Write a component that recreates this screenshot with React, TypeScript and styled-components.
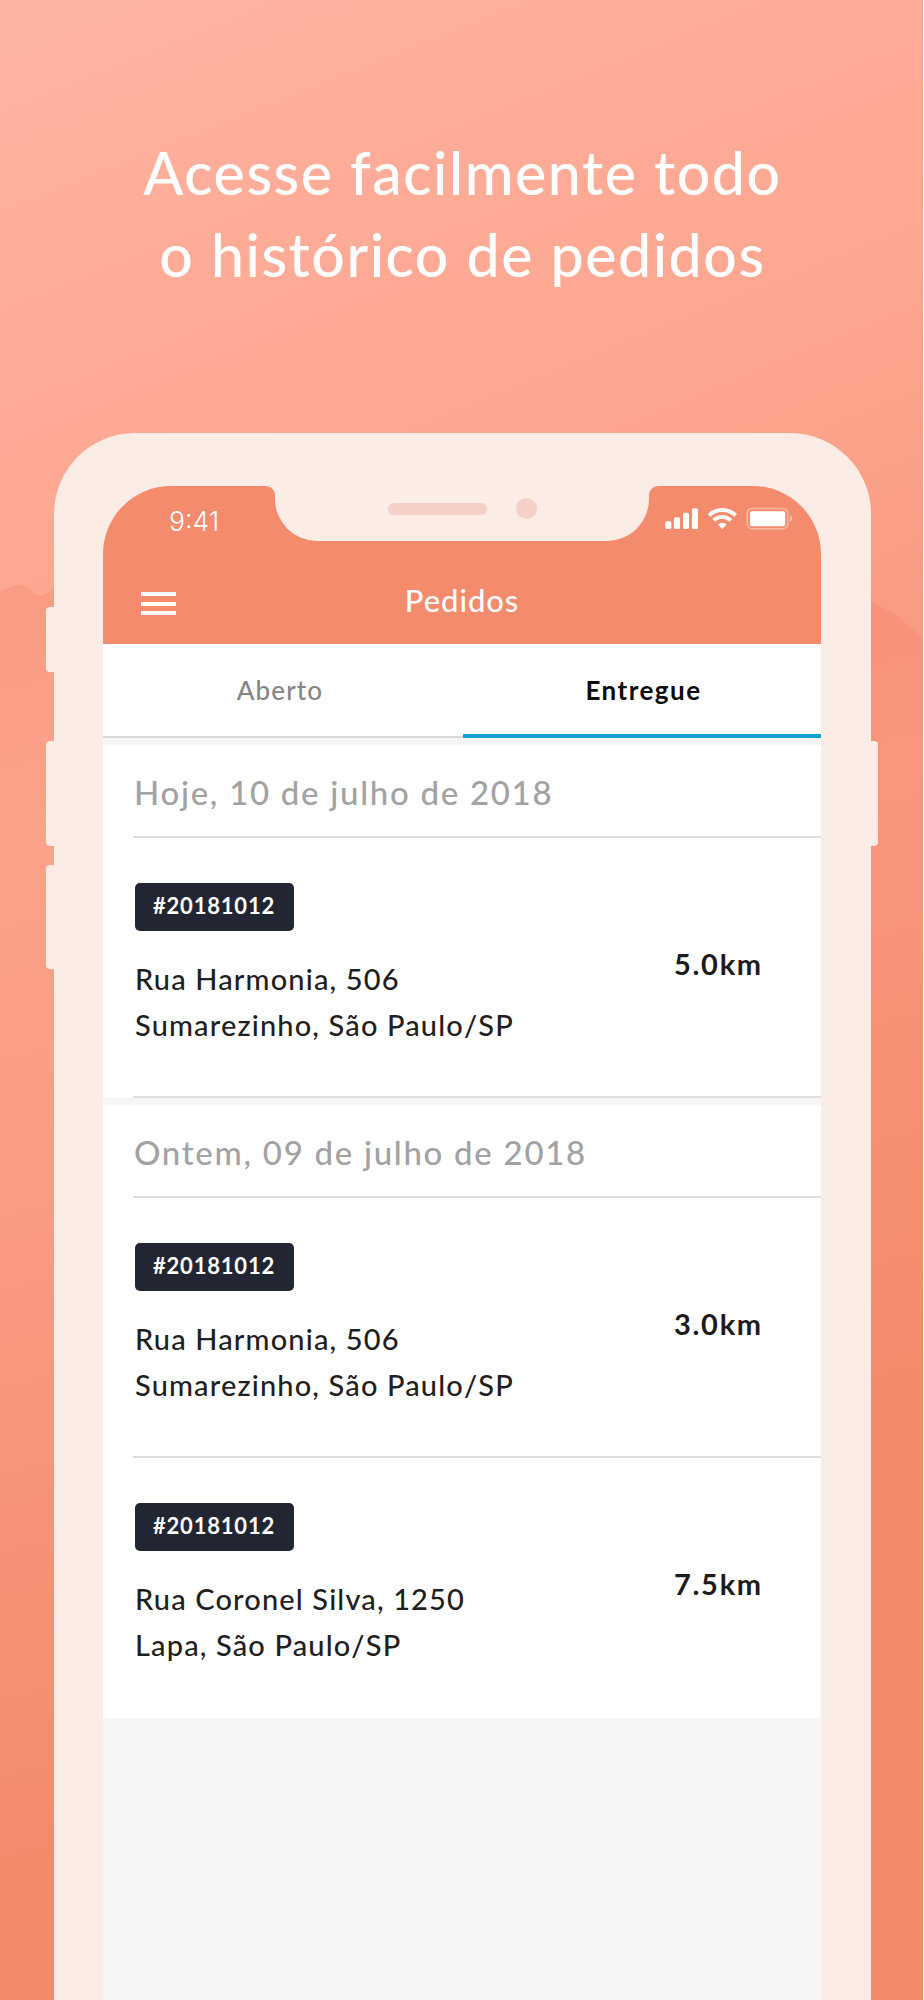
import React from "react";
import styled, { createGlobalStyle, css } from "styled-components";

const coral = "#f48b6d";
const shell = "#fbece5";

const GlobalStyle = createGlobalStyle`
  *, *::before, *::after { box-sizing: border-box; }
  html, body { margin: 0; padding: 0; background: #fff; }
  body { font-family: Lato, "Liberation Sans", sans-serif; font-weight: 500; }
`;

const Page = styled.main`
  position: relative;
  width: 923px;
  height: 2000px;
  overflow: hidden;
  display: flex;
  flex-direction: column;
  background: linear-gradient(158deg, #ffb4a2 0, #feab97 350px, #fda791 560px, #fba189 750px, #fa9b84 920px);
`;

const Landscape = styled.svg`
  position: absolute;
  inset: 0;
`;

const Headline = styled.h1`
  position: relative;
  margin: 0;
  padding: 132px 0 0 2px;
  height: 433px;
  text-align: center;
  font-size: 59px;
  line-height: 82px;
  font-weight: 500;
  letter-spacing: 1.56px;
  color: #fff;
`;

const Phone = styled.section`
  position: relative;
  flex: 1;
  display: flex;
  width: 817px;
  margin-left: 54px;
  padding: 53px 50px 0 49px;
  border-radius: 81px 81px 0 0;
  background: ${shell};
`;

const SideButton = styled.span<{ $side: "left" | "right"; $top: number; $height: number }>`
  position: absolute;
  top: ${(p) => p.$top}px;
  height: ${(p) => p.$height}px;
  background: ${shell};
  ${(p) =>
    p.$side === "left"
      ? css`
          left: -8px;
          width: 9px;
          border-radius: 4px 0 0 4px;
        `
      : css`
          right: -7px;
          width: 8px;
          border-radius: 0 4px 4px 0;
        `}
`;

const Screen = styled.div`
  flex: 1;
  display: flex;
  flex-direction: column;
  overflow: hidden;
  border-radius: 68px 68px 0 0;
  background: #f5f5f5;
`;

const StatusBar = styled.div`
  display: flex;
  height: 55px;
  background: ${shell};
`;

const StatusSide = styled.div<{ $align: "left" | "right" }>`
  display: flex;
  width: 172px;
  background: ${coral};
  ${(p) =>
    p.$align === "left"
      ? css`
          padding: 19px 0 0 66px;
          border-top-right-radius: 9px;
        `
      : css`
          padding: 21px 0 0 16px;
          border-top-left-radius: 9px;
        `}
`;

const Clock = styled.time`
  font-family: Inter, sans-serif;
  font-size: 26.5px;
  line-height: 32px;
  font-weight: 350;
  letter-spacing: 0;
  color: #fff;
`;

const NotchWell = styled.div`
  flex: 1;
  background: ${coral};
`;

const Notch = styled.div`
  display: flex;
  height: 100%;
  padding: 12px 0 0 113px;
  gap: 29px;
  border-radius: 0 0 42px 42px;
  background: ${shell};
`;

const Speaker = styled.span`
  width: 99px;
  height: 12px;
  margin-top: 5px;
  border-radius: 6px;
  background: #f5d0c8;
`;

const Camera = styled.span`
  width: 21px;
  height: 21px;
  border-radius: 50%;
  background: #f5d0c8;
`;

const NavBar = styled.header`
  display: grid;
  grid-template-columns: 1fr auto 1fr;
  align-items: start;
  height: 103px;
  padding: 38px 38px 0;
  background: ${coral};
`;

const MenuButton = styled.button`
  display: flex;
  flex-direction: column;
  gap: 5.5px;
  width: 35px;
  margin: 13px 0 0;
  padding: 0;
  border: 0;
  background: none;
`;

const MenuBar = styled.span`
  height: 4px;
  background: #fff;
`;

const NavTitle = styled.h2`
  margin: 0;
  font-size: 31px;
  line-height: 42px;
  font-weight: 500;
  letter-spacing: 0.95px;
  color: #fff;
`;

const Tabs = styled.nav`
  display: flex;
  height: 94px;
  background: #fff;
`;

const Tab = styled.button<{ $active?: boolean }>`
  flex: ${(p) => (p.$active ? "0 0 358px" : "1")};
  display: block;
  margin: 0;
  padding: ${(p) => (p.$active ? "29px 0 27px 3px" : "29px 6px 30px 0")};
  border: 0;
  border-bottom: ${(p) => (p.$active ? "4px solid #12a2d6" : "2px solid #d9d9d9")};
  background: none;
  font: inherit;
  font-size: 26px;
  line-height: 32px;
  font-weight: ${(p) => (p.$active ? 700 : 500)};
  letter-spacing: ${(p) => (p.$active ? 1.47 : 1.15)}px;
  color: ${(p) => (p.$active ? "#0b0b0b" : "#858585")};
`;

const Day = styled.section`
  margin-top: 7px;
  background: #fff;
`;

const DayTitle = styled.h3`
  margin: 0 0 0 30px;
  padding: 27px 0 24px 1px;
  border-bottom: 2px solid #dfdfe1;
  font-size: 33px;
  line-height: 40px;
  font-weight: 500;
  letter-spacing: 1.7px;
  color: #a2a2a4;
`;

const Order = styled.article<{ $last?: boolean }>`
  display: flex;
  align-items: center;
  justify-content: space-between;
  height: 260px;
  margin-left: 30px;
  border-bottom: 2px solid ${(p) => (p.$last ? "transparent" : "#dfdfe1")};
`;

const OrderInfo = styled.div`
  padding: 0 0 3px 2px;
`;

const OrderCode = styled.span`
  display: block;
  width: 159px;
  height: 48px;
  padding-left: 18px;
  border-radius: 5px;
  background: #222632;
  font-size: 22px;
  line-height: 45px;
  font-weight: 700;
  letter-spacing: 0.8px;
  color: #fff;
`;

const Address = styled.address`
  margin-top: 25px;
  font-size: 29px;
  line-height: 46px;
  font-style: normal;
  letter-spacing: 1.14px;
  white-space: pre-line;
  color: #1f1f1f;
`;

const Distance = styled.strong`
  width: 147px;
  margin-bottom: 6px;
  font-size: 29px;
  line-height: 46px;
  font-weight: 700;
  letter-spacing: 1.7px;
  color: #1c1c1c;
`;

const StatusIcons = () => (
  <svg width="130" height="24" viewBox="0 0 130 24" fill="#fff">
    <rect x="0.3" y="14.2" width="6" height="7.8" rx="1.6" />
    <rect x="9" y="10.2" width="6" height="11.8" rx="1.6" />
    <rect x="18" y="5.7" width="6" height="16.3" rx="1.6" />
    <rect x="27" y="1.2" width="6" height="20.8" rx="1.6" />
    <g fill="none" stroke="#fff" strokeWidth="3.9">
      <path d="M44 8.3 A19.3 19.3 0 0 1 70.6 8.3" />
      <path d="M48.8 13.3 A12.2 12.2 0 0 1 65.8 13.3" />
    </g>
    <path d="M57.3 22 L52.9 17.6 A6.3 6.3 0 0 1 61.7 17.6 Z" />
    <rect x="82.2" y="1.5" width="40.6" height="20.4" rx="5" fill="none" stroke="#fff" strokeOpacity="0.36" strokeWidth="1.7" />
    <rect x="85" y="4.3" width="35.2" height="14.9" rx="2" />
    <path d="M125.4 8.6 a4.6 4.6 0 0 1 0 6.2 z" fillOpacity="0.42" stroke="#fff" strokeOpacity="0.3" strokeWidth="0.8" />
  </svg>
);

const Hills = () => (
  <Landscape width="923" height="2000" viewBox="0 0 923 2000">
    <defs>
      <linearGradient id="hillWest" gradientUnits="userSpaceOnUse" x1="0" y1="600" x2="306" y2="1823">
        <stop offset="0" stopColor="#fa9b85" />
        <stop offset="0.185" stopColor="#fba28a" />
        <stop offset="0.42" stopColor="#fa9c85" />
        <stop offset="0.69" stopColor="#f7937a" />
        <stop offset="0.98" stopColor="#f48a6c" />
      </linearGradient>
      <linearGradient id="hillEast" gradientUnits="userSpaceOnUse" x1="880" y1="600" x2="1068" y2="1353">
        <stop offset="0" stopColor="#f8917a" />
        <stop offset="0.2" stopColor="#f9967e" />
        <stop offset="0.4" stopColor="#f8947b" />
        <stop offset="0.7" stopColor="#f68e71" />
        <stop offset="1" stopColor="#f48a6c" />
      </linearGradient>
    </defs>
    <path
      fill="url(#hillWest)"
      d="M0 591 C8 589 13 585 20 585 C29 585 34 596 41 596 C47 596 50 588 58 585 L460 600 V2000 H0 Z"
    />
    <path fill="url(#hillEast)" d="M460 600 H866 C880 605 892 612 902 620 C909 625 916 632 923 638 V2000 H460 Z" />
  </Landscape>
);

const days = [
  {
    title: "Hoje, 10 de julho de 2018",
    orders: [{ code: "#20181012", address: "Rua Harmonia, 506\nSumarezinho, São Paulo/SP", distance: "5.0km" }],
  },
  {
    title: "Ontem, 09 de julho de 2018",
    orders: [
      { code: "#20181012", address: "Rua Harmonia, 506\nSumarezinho, São Paulo/SP", distance: "3.0km" },
      { code: "#20181012", address: "Rua Coronel Silva, 1250\nLapa, São Paulo/SP", distance: "7.5km" },
    ],
  },
];

export default function App() {
  return (
    <>
      <GlobalStyle />
      <Page>
        <Hills />
        <Headline>
          Acesse facilmente todo
          <br />o histórico de pedidos
        </Headline>
        <Phone>
          <SideButton $side="left" $top={174} $height={65} />
          <SideButton $side="left" $top={308} $height={105} />
          <SideButton $side="left" $top={432} $height={104} />
          <SideButton $side="right" $top={308} $height={105} />
          <Screen>
            <StatusBar>
              <StatusSide $align="left">
                <Clock>9:41</Clock>
              </StatusSide>
              <NotchWell>
                <Notch>
                  <Speaker />
                  <Camera />
                </Notch>
              </NotchWell>
              <StatusSide $align="right">
                <StatusIcons />
              </StatusSide>
            </StatusBar>
            <NavBar>
              <MenuButton aria-label="Menu">
                <MenuBar />
                <MenuBar />
                <MenuBar />
              </MenuButton>
              <NavTitle>Pedidos</NavTitle>
            </NavBar>
            <Tabs>
              <Tab>Aberto</Tab>
              <Tab $active>Entregue</Tab>
            </Tabs>
            {days.map((day, d) => (
              <Day key={day.title}>
                <DayTitle>{day.title}</DayTitle>
                {day.orders.map((order, i) => (
                  <Order key={i} $last={d === days.length - 1 && i === day.orders.length - 1}>
                    <OrderInfo>
                      <OrderCode>{order.code}</OrderCode>
                      <Address>{order.address}</Address>
                    </OrderInfo>
                    <Distance>{order.distance}</Distance>
                  </Order>
                ))}
              </Day>
            ))}
          </Screen>
        </Phone>
      </Page>
    </>
  );
}
